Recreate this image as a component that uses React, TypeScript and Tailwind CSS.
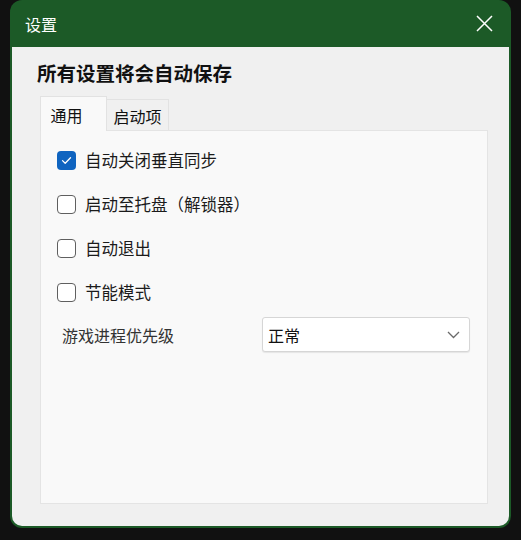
import { useState } from "react";

const options = [
  { id: "vsync", label: "自动关闭垂直同步", checked: true },
  { id: "tray", label: "启动至托盘（解锁器）", checked: false },
  { id: "exit", label: "自动退出", checked: false },
  { id: "eco", label: "节能模式", checked: false },
];

function CheckRow({ label, checked, onToggle }: { label: string; checked: boolean; onToggle: () => void }) {
  return (
    <label className="flex items-center h-[44px] cursor-pointer" onClick={onToggle}>
      {checked ? (
        <span className="w-[19px] h-[19px] rounded-[4px] bg-[#0f64c0] flex items-center justify-center">
          <svg width="11" height="9" viewBox="0 0 11 9" fill="none">
            <path d="M1.5 4.6L4.2 7.2L9.5 1.8" stroke="#ffffff" strokeWidth="1.3" strokeLinecap="round" strokeLinejoin="round" />
          </svg>
        </span>
      ) : (
        <span className="w-[19px] h-[19px] rounded-[4px] border border-[#5f5f5f] bg-white" />
      )}
      <span className="ml-[9px] text-[16.5px] text-[#1b1b1b]">{label}</span>
    </label>
  );
}

export default function App() {
  const [checks, setChecks] = useState(options.map((o) => o.checked));
  const [tab, setTab] = useState(0);

  return (
    <div
      className="w-[521px] h-[540px] bg-[#111111] pl-[10px] pr-[10px] pb-[12px]"
      style={{ fontFamily: '"Noto Sans CJK SC", "Noto Sans", sans-serif' }}
    >
      <div className="h-full flex flex-col rounded-[12px] bg-[#1c5a27] p-[2px] pt-0 overflow-hidden">
        <div className="h-[47px] shrink-0 flex items-center justify-between pl-[13px] pr-[16px]">
          <span className="text-white text-[16px]">设置</span>
          <svg width="17" height="17" viewBox="0 0 17 17" fill="none">
            <path d="M1 1L16 16M16 1L1 16" stroke="#ffffff" strokeWidth="1.5" />
          </svg>
        </div>
        <div className="flex-1 flex flex-col bg-[#f0f0f0] rounded-b-[10px] pl-[26px] pr-[21px] pb-[22px]">
          <div className="pt-[13px] h-[49px] text-[19.5px] font-bold text-[#111111] leading-[26px] -ml-px">
            所有设置将会自动保存
          </div>
          <div className="flex items-end pl-[2px]">
            <button
              onClick={() => setTab(0)}
              className="w-[67px] h-[35px] bg-[#f9f9f9] border border-b-0 border-[#e2e2e2] text-[16px] text-[#111] pt-[2px] pr-[14px] -mb-px relative z-10"
            >
              通用
            </button>
            <button
              onClick={() => setTab(1)}
              className="w-[62px] h-[31px] bg-[#f0f0f0] border border-l-0 border-b-0 border-[#e2e2e2] text-[16px] text-[#111] pt-[2px]"
            >
              启动项
            </button>
          </div>
          <div className="flex-1 ml-[2px] bg-[#f9f9f9] border border-[#e4e4e4] pl-[16px] pr-[16px] pt-[7px]">
            {tab === 0 &&
              options.map((o, i) => (
                <CheckRow
                  key={o.id}
                  label={o.label}
                  checked={checks[i]}
                  onToggle={() => setChecks(checks.map((c, j) => (j === i ? !c : c)))}
                />
              ))}
            {tab === 0 && (
              <div className="flex items-center mt-[3px]">
                <span className="w-[205px] pl-[5px] text-[16px] text-[#333333]">游戏进程优先级</span>
                <div className="w-[208px] h-[35px] bg-white border border-[#d6d6d6] rounded-[3px] flex items-center justify-between pl-[5px] pr-[9px] shadow-[0_1px_1px_rgba(0,0,0,0.08)]">
                  <span className="text-[16px] text-[#111]">正常</span>
                  <svg width="13" height="8" viewBox="0 0 13 8" fill="none">
                    <path d="M1 1L6.5 6.5L12 1" stroke="#6a6a6a" strokeWidth="1.3" />
                  </svg>
                </div>
              </div>
            )}
          </div>
        </div>
      </div>
    </div>
  );
}
